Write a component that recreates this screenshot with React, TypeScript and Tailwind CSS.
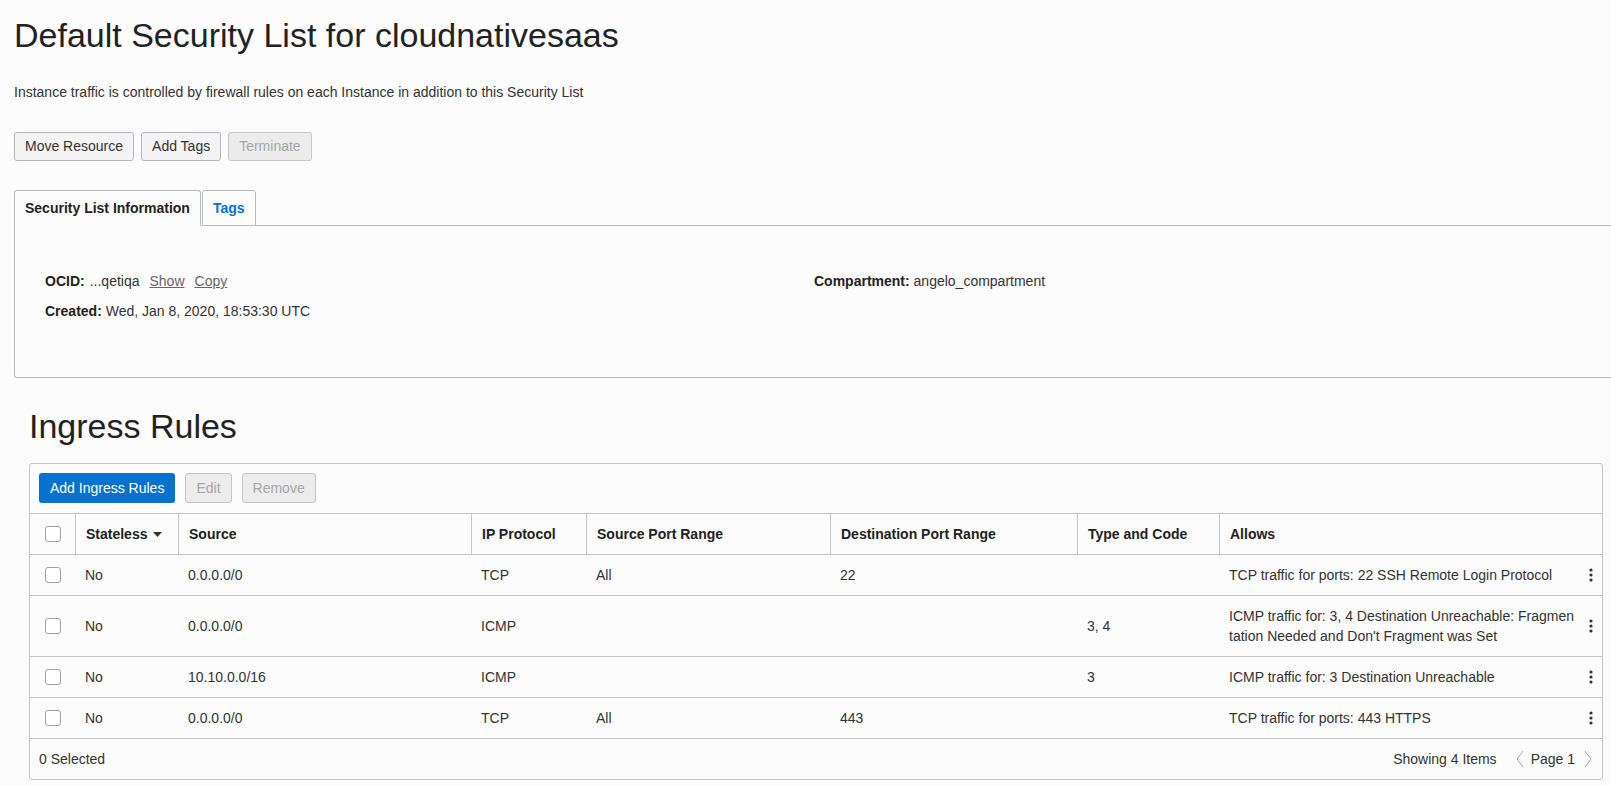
const rows = [
  { stateless: "No", source: "0.0.0.0/0", proto: "TCP", srcPort: "All", dstPort: "22", type: "", allows: ["TCP traffic for ports: 22 SSH Remote Login Protocol"] },
  {
    stateless: "No",
    source: "0.0.0.0/0",
    proto: "ICMP",
    srcPort: "",
    dstPort: "",
    type: "3, 4",
    allows: ["ICMP traffic for: 3, 4 Destination Unreachable: Fragmen", "tation Needed and Don't Fragment was Set"],
  },
  { stateless: "No", source: "10.10.0.0/16", proto: "ICMP", srcPort: "", dstPort: "", type: "3", allows: ["ICMP traffic for: 3 Destination Unreachable"] },
  { stateless: "No", source: "0.0.0.0/0", proto: "TCP", srcPort: "All", dstPort: "443", type: "", allows: ["TCP traffic for ports: 443 HTTPS"] },
];

const grid = "grid grid-cols-[45px_103px_293px_115px_244px_247px_142px_1fr]";

const Checkbox = () => <span className="block w-4 h-4 rounded-[3px] border border-[#9fa1a6] bg-white" />;

const Kebab = () => (
  <svg width="6" height="16" viewBox="0 0 6 16" className="shrink-0">
    <circle cx="3" cy="3" r="1.6" fill="#333" />
    <circle cx="3" cy="8" r="1.6" fill="#333" />
    <circle cx="3" cy="13" r="1.6" fill="#333" />
  </svg>
);

const Button = ({ label, disabled = false }: { label: string; disabled?: boolean }) => (
  <button
    className={
      disabled
        ? "h-[29px] px-[10px] rounded-[3px] border border-[#c4c6cc] bg-[#ececec] text-[14px] text-[#a6a6a6]"
        : "h-[29px] px-[10px] rounded-[3px] border border-[#b3b6bd] bg-[#f4f4f4] text-[14px] text-[#333]"
    }
  >
    {label}
  </button>
);

const HeadCell = ({ children }: { children?: React.ReactNode }) => (
  <div className="border-l border-[#c2c4ca] px-[10px] flex items-center font-bold text-[#222] whitespace-nowrap">{children}</div>
);

export default function App() {
  return (
    <div className="min-h-screen bg-[#fcfcfc] pt-[15px] pl-[14px] text-[14px] text-[#333]" style={{ fontFamily: '"Liberation Sans", Arial, sans-serif' }}>
      <h1 className="text-[34px] leading-[40px] text-[#222] font-normal">Default Security List for cloudnativesaas</h1>
      <p className="mt-[27px] leading-[20px]">Instance traffic is controlled by firewall rules on each Instance in addition to this Security List</p>

      <div className="mt-[30px] flex gap-[7px]">
        <Button label="Move Resource" />
        <Button label="Add Tags" />
        <Button label="Terminate" disabled />
      </div>

      <div className="mt-[29px] flex h-[36px]">
        <div className="px-[10px] border-t border-x border-[#b8bbc2] rounded-t-[3px] flex items-center font-bold text-[#222]">Security List Information</div>
        <div className="ml-px px-[10px] border border-[#b8bbc2] rounded-t-[3px] flex items-center font-bold text-[#0572ce]">Tags</div>
        <div className="flex-1 border-b border-[#b8bbc2]" />
      </div>
      <div className="border-l border-b border-[#b8bbc2] rounded-bl-[3px] pt-[45px] pb-[56px] pl-[30px] grid grid-cols-[769px_1fr] leading-[20px]">
        <div>
          <div className="flex">
            <span className="font-bold text-[#222]">OCID:</span>
            <span className="ml-[5px]">...qetiqa</span>
            <span className="ml-[10px] underline text-[#666]">Show</span>
            <span className="ml-[10px] underline text-[#666]">Copy</span>
          </div>
          <div className="mt-[10px]">
            <span className="font-bold text-[#222]">Created:</span> Wed, Jan 8, 2020, 18:53:30 UTC
          </div>
        </div>
        <div>
          <span className="font-bold text-[#222]">Compartment:</span> angelo_compartment
        </div>
      </div>

      <div className="pl-[15px] pr-[8px] pb-[7px]">
        <h2 className="mt-[28px] text-[34px] leading-[40px] text-[#222] font-normal">Ingress Rules</h2>
        <div className="mt-[17px] border border-[#c2c4ca] rounded-[3px] leading-[20px]">
          <div className="flex gap-[10px] pl-[9px] pt-[9px] pb-[10px]">
            <button className="h-[30px] px-[11px] rounded-[3px] bg-[#0572ce] text-white text-[14px]">Add Ingress Rules</button>
            <button className="h-[30px] px-[10px] rounded-[3px] border border-[#c4c6cc] bg-[#ececec] text-[#a6a6a6] text-[14px]">Edit</button>
            <button className="h-[30px] px-[10px] rounded-[3px] border border-[#c4c6cc] bg-[#ececec] text-[#a6a6a6] text-[14px]">Remove</button>
          </div>

          <div className={`${grid} h-[42px] border-t border-b border-[#c2c4ca]`}>
            <div className="flex items-center justify-center">
              <Checkbox />
            </div>
            <HeadCell>
              Stateless
              <svg width="9" height="5" viewBox="0 0 9 5" className="ml-[6px]">
                <path d="M0 0h9L4.5 5z" fill="#333" />
              </svg>
            </HeadCell>
            <HeadCell>Source</HeadCell>
            <HeadCell>IP Protocol</HeadCell>
            <HeadCell>Source Port Range</HeadCell>
            <HeadCell>Destination Port Range</HeadCell>
            <HeadCell>Type and Code</HeadCell>
            <HeadCell>Allows</HeadCell>
          </div>

          {rows.map((r, i) => (
            <div key={i} className={`${grid} border-b border-[#c2c4ca]`}>
              <div className="flex items-center justify-center">
                <Checkbox />
              </div>
              <div className="px-[10px] py-[10px] flex items-center">{r.stateless}</div>
              <div className="px-[10px] py-[10px] flex items-center">{r.source}</div>
              <div className="px-[10px] py-[10px] flex items-center">{r.proto}</div>
              <div className="px-[10px] py-[10px] flex items-center">{r.srcPort}</div>
              <div className="px-[10px] py-[10px] flex items-center">{r.dstPort}</div>
              <div className="px-[10px] py-[10px] flex items-center">{r.type}</div>
              <div className="pl-[10px] pr-[8px] py-[10px] flex items-center justify-between">
                <div className="whitespace-nowrap">
                  {r.allows.map((l, j) => (
                    <div key={j}>{l}</div>
                  ))}
                </div>
                <Kebab />
              </div>
            </div>
          ))}

          <div className="h-[40px] flex items-center justify-between pl-[9px] pr-[9px]">
            <span>0 Selected</span>
            <div className="flex items-center">
              <span>Showing 4 Items</span>
              <svg width="10" height="18" viewBox="0 0 10 18" className="ml-[18px]">
                <path d="M8 1L2 9l6 8" fill="none" stroke="#a3a3a3" strokeWidth="1" />
              </svg>
              <span className="ml-[6px]">Page 1</span>
              <svg width="10" height="18" viewBox="0 0 10 18" className="ml-[8px]">
                <path d="M2 1l6 8-6 8" fill="none" stroke="#a3a3a3" strokeWidth="1" />
              </svg>
            </div>
          </div>
        </div>
      </div>
    </div>
  );
}
